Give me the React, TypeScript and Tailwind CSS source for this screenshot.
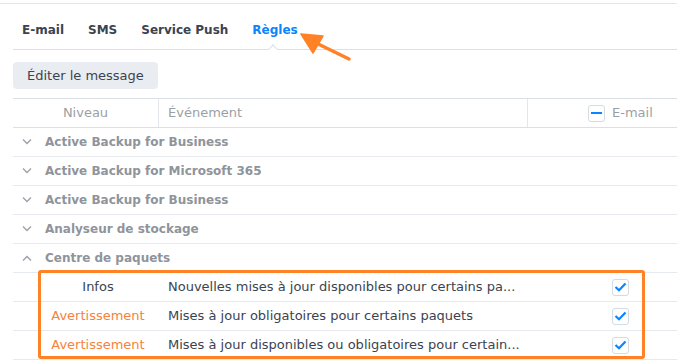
import React from "react";

const font = { fontFamily: '"DejaVu Sans", Verdana, sans-serif' };

function Chevron({ up }: { up?: boolean }) {
  return (
    <svg width="10" height="6" viewBox="0 0 10 6" className="shrink-0">
      <path
        d={up ? "M1 5.5 L5 1.5 L9 5.5" : "M1 0.5 L5 4.5 L9 0.5"}
        fill="none"
        stroke="#9aa0a8"
        strokeWidth="1.3"
      />
    </svg>
  );
}

function Check() {
  return (
    <div className="w-[17px] h-[17px] rounded-[3px] border border-[#d5dbe3] bg-white flex items-center justify-center">
      <svg width="13" height="10" viewBox="0 0 13 10">
        <path d="M1.5 5 L5 8.3 L11.5 1.5" fill="none" stroke="#0a84ff" strokeWidth="2.2" />
      </svg>
    </div>
  );
}

const groups = [
  "Active Backup for Business",
  "Active Backup for Microsoft 365",
  "Active Backup for Business",
  "Analyseur de stockage",
];

const rows = [
  { level: "Infos", warn: false, text: "Nouvelles mises à jour disponibles pour certains pa..." },
  { level: "Avertissement", warn: true, text: "Mises à jour obligatoires pour certains paquets" },
  { level: "Avertissement", warn: true, text: "Mises à jour disponibles ou obligatoires pour certain..." },
];

export default function App() {
  return (
    <div className="relative w-[677px] h-[361px] bg-white overflow-hidden text-[13px]" style={font}>
      <div className="h-[4px] border-b border-[#e3e6ea]" />
      <div className="ml-[13px] h-[46px] border-b border-[#dbe0e6] flex items-end pb-[10px] relative">
        <div className="flex gap-[24px] pl-[9px] font-bold text-[12px] text-[#3b4350]">
          <span>E-mail</span>
          <span>SMS</span>
          <span>Service Push</span>
          <span className="text-[#0a84ff]">Règles</span>
        </div>
        <div className="absolute left-[254px] bottom-[-1px] w-[12px] h-[6px] overflow-hidden">
          <div className="w-[8px] h-[8px] bg-white border-l border-t border-[#dbe0e6] rotate-45 mx-auto mt-[2px]" />
        </div>
      </div>
      <div className="ml-[13px] mt-[12px] mb-[9px]">
        <div className="inline-flex items-center h-[27px] px-[14px] rounded-[4px] bg-[#e9edf2] text-[#3b4350]">
          Éditer le message
        </div>
      </div>
      <div className="ml-[13px]">
        <div className="flex h-[30px] border-t border-b border-[#dbe0e6] text-[#9a9fa6] items-center">
          <div className="w-[146px] text-center border-r border-[#e3e7ec] h-full flex items-center justify-center">Niveau</div>
          <div className="w-[369px] pl-[9px] border-r border-[#e3e7ec] h-full flex items-center">Événement</div>
          <div className="flex-1 flex items-center pl-[60px] gap-[7px]">
            <div className="w-[17px] h-[17px] rounded-[3px] border border-[#d5dbe3] flex items-center justify-center">
              <div className="w-[11px] h-[2px] bg-[#0a84ff]" />
            </div>
            <span>E-mail</span>
          </div>
        </div>
        {groups.map((g, i) => (
          <div key={i} className="flex h-[29px] items-center border-b border-[#e6e9ed] pl-[9px] gap-[13px] font-bold text-[12px] text-[#8f949b]">
            <Chevron />
            <span>{g}</span>
          </div>
        ))}
        <div className="flex h-[29px] items-center border-b border-[#e6e9ed] pl-[9px] gap-[13px] font-bold text-[12px] text-[#8f949b]">
          <Chevron up />
          <span>Centre de paquets</span>
        </div>
        {rows.map((r, i) => (
          <div key={i} className="flex h-[29px] items-center border-b border-[#e6e9ed] text-[#3b4350]">
            <div className={`w-[146px] pl-[24px] text-center ${r.warn ? "text-[#f5823c]" : ""}`}>{r.level}</div>
            <div className="w-[369px] pl-[9px] whitespace-nowrap">{r.text}</div>
            <div className="flex-1 pl-[84px]">
              <Check />
            </div>
          </div>
        ))}
      </div>
      <div className="absolute left-[38px] top-[270px] w-[607px] h-[89px] border-[3px] border-[#ff8226] rounded-[3px]" />
      <svg className="absolute left-0 top-0" width="677" height="361">
        <line x1="349" y1="59" x2="312" y2="41" stroke="#ff8226" strokeWidth="3.5" strokeLinecap="round" />
        <path d="M301 34 L323 36 L313 53 Z" fill="#ff8226" stroke="#ff8226" strokeWidth="1.5" strokeLinejoin="round" />
      </svg>
    </div>
  );
}
